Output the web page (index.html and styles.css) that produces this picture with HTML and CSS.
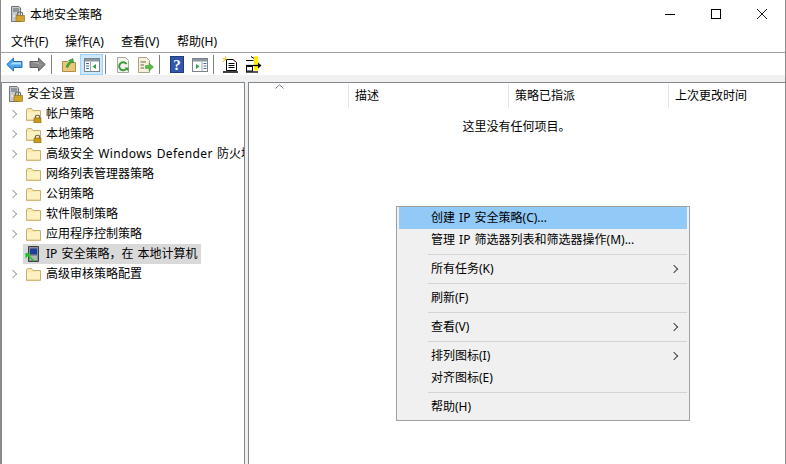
FILE: index.html
```html
<!DOCTYPE html>
<html lang="zh-CN">
<head>
	<meta charset="UTF-8">
	<title>本地安全策略</title>
	<link rel="stylesheet" href="styles.css">
</head>
<body>
	<svg class="defs" width="0" height="0">
		<symbol id="folder" viewBox="0 0 16 16">
			<path d="M1.500 3.500V14.500H15.500V4.500H8L6.500 2.500H2.500Z" fill="#fbe9a8" stroke="#c4b07c"/>
			<path d="M2 6H15V14H2Z" fill="#fdf1c0"/>
			<path d="M2 14H15" stroke="#dcc27a"/>
		</symbol>
		<symbol id="lock" viewBox="0 0 9 9">
			<path d="M2.500 4V2.500C2.500 .8 6.500 .8 6.500 2.500V4" fill="none" stroke="#6b6b5a" stroke-width="1.200"/>
			<rect x="1" y="4" width="7" height="5" fill="#c99a1e" stroke="#8a6510" stroke-width=".6"/>
		</symbol>
		<symbol id="server" viewBox="0 0 16 16">
			<path d="M1.500 .5H9L10.500 2V15.500H1.500Z" fill="#c4cad2" stroke="#6f7680"/>
			<path d="M3 3H9M3 5H9" stroke="#596069"/>
			<path d="M3 10H6" stroke="#fff"/>
			<path d="M7.500 9.500V7.500C7.500 5.500 12.500 5.500 12.500 7.500V9.500" fill="none" stroke="#6b6b5a" stroke-width="1.200"/>
			<rect x="6" y="9.500" width="8.500" height="6" fill="#d2a32a" stroke="#8a6510" stroke-width=".6"/>
		</symbol>
	</svg>

	<div class="window">
		<div class="titlebar">
			<svg class="title_icon" width="16" height="16"><use href="#server"/></svg>
			<span class="title_text">本地安全策略</span>
			<div class="win_btns">
				<svg width="12" height="12" viewBox="0 0 12 12"><path d="M1 6.500H11" stroke="#000"/></svg>
				<svg width="12" height="12" viewBox="0 0 12 12"><rect x="1.500" y="1.500" width="9" height="9" fill="none" stroke="#000"/></svg>
				<svg width="12" height="12" viewBox="0 0 12 12"><path d="M1 1L11 11M11 1L1 11" stroke="#000" stroke-width=".9"/></svg>
			</div>
		</div>

		<div class="menubar">
			<span>文件(F)</span>
			<span>操作(A)</span>
			<span>查看(V)</span>
			<span>帮助(H)</span>
		</div>

		<div class="toolbar">
			<span class="tool">
				<svg width="17" height="15" viewBox="0 0 17 15"><path d="M.8 7.500L7.500 1V4.500H16V10.500H7.500V14Z" fill="#4aa6ec" stroke="#2a6fb5"/><path d="M7 5.300H15V7.500H4Z" fill="#a9dcf8"/></svg>
			</span>
			<span class="tool">
				<svg width="17" height="15" viewBox="0 0 17 15"><path d="M16.200 7.500L9.500 1V4.500H1V10.500H9.500V14Z" fill="#8a8a8a" stroke="#5c5c5c"/><path d="M2 5.300H10V7.500H13Z" fill="#b5b5b5"/></svg>
			</span>
			<i class="sep"></i>
			<span class="tool">
				<svg width="16" height="16" viewBox="0 0 16 16"><path d="M1.500 4.500V14.500H14.500V5.500H8L7 4.500Z" fill="#e9c877" stroke="#b08c45"/><path d="M5 10C6 7 7.500 5.500 9 4.500L7.500 3.500L12 1.500L12.500 6L11 5C9.500 6.500 8 8 7 10.500Z" fill="#3fae3a" stroke="#2a7d28" stroke-width=".5"/></svg>
			</span>
			<span class="tool active">
				<svg width="16" height="16" viewBox="0 0 16 16"><rect x=".5" y="1.500" width="15" height="13" fill="#fff" stroke="#7b848c"/><path d="M1 2H15V4.500H1Z" fill="#8e979f"/><path d="M6.500 5V14" stroke="#9aa3aa"/><path d="M2 6.500H5M2 9H5M2 11.500H5" stroke="#3a6ea5" stroke-width="1.200"/><path d="M12 7V12L8.500 9.500Z" fill="#2ea043"/></svg>
			</span>
			<i class="sep"></i>
			<span class="tool">
				<svg width="14" height="16" viewBox="0 0 14 16"><path d="M1.500 .5H9.500L12.500 3.500V15.500H1.500Z" fill="#f4f4f0" stroke="#a9a9a0"/><path d="M10.500 7A4 4 0 1 0 10.500 11.500" fill="none" stroke="#3b9c3a" stroke-width="2"/><path d="M8.500 10.500H12.500V14.500Z" fill="#3b9c3a"/></svg>
			</span>
			<span class="tool">
				<svg width="17" height="16" viewBox="0 0 17 16"><path d="M1.500 .5H9.500L12.500 3.500V15.500H1.500Z" fill="#f7f1d8" stroke="#a9a28c"/><path d="M3.500 5H9M3.500 8H7M3.500 11H7" stroke="#6e6a5c"/><path d="M8.500 8.500H12V6L16.500 10L12 14V11.500H8.500Z" fill="#55b848" stroke="#3c8f35" stroke-width=".5"/></svg>
			</span>
			<i class="sep"></i>
			<span class="tool">
				<svg width="14" height="17" viewBox="0 0 14 17"><rect x=".5" y=".5" width="13" height="16" fill="#3158a8" stroke="#1f3c80"/><text x="7" y="13.500" class="help_mark">?</text></svg>
			</span>
			<span class="tool">
				<svg width="16" height="16" viewBox="0 0 16 16"><rect x=".5" y="1.500" width="15" height="13" fill="#fff" stroke="#7b848c"/><path d="M1 2H15V4.500H1Z" fill="#8e979f"/><path d="M10 5V14" stroke="#9aa3aa"/><path d="M11.500 6.500H14.500M11.500 9H14.500M11.500 11.500H14.500" stroke="#3a6ea5" stroke-width="1.200"/><path d="M4 7V12L7.500 9.500Z" fill="#2ea043"/></svg>
			</span>
			<i class="sep"></i>
			<span class="tool">
				<svg width="17" height="17" viewBox="0 0 17 17"><path d="M4.500 3.500H11L14.500 6.500V14.500H4.500Z" fill="#fff" stroke="#000"/><path d="M6.500 7.500H12.500M6.500 9.500H12.500M6.500 11.500H12.500" stroke="#000"/><path d="M1 16H16" stroke="#000" stroke-width="1.500"/><path d="M.5 2L4 3.500M3.500 .5L4 3.500M.5 5.500L4 3.500" stroke="#e6b800"/></svg>
			</span>
			<span class="tool">
				<svg width="17" height="17" viewBox="0 0 17 17"><rect x="9" y=".5" width="4" height="14" fill="#ffee00"/><path d="M1 9.500H14" stroke="#000" stroke-width="1.200"/><path d="M13 6.500L16.500 9.500L13 12.500Z"/><rect x="1.500" y="10.500" width="6" height="4.500" fill="#fff" stroke="#000"/><path d="M1 4.500H8.500M6 .5L9 2.500" stroke="#000"/><path d="M1 16H13" stroke="#000" stroke-width="1.300"/></svg>
			</span>
		</div>

		<div class="content">
			<div class="tree">
				<div class="row root">
					<svg width="16" height="16"><use href="#server"/></svg>
					<span>安全设置</span>
				</div>
				<div class="row">
					<i class="chev"></i>
					<span class="icon_box"><svg width="16" height="16"><use href="#folder"/></svg><svg class="lock" width="9" height="9"><use href="#lock"/></svg></span>
					<span>帐户策略</span>
				</div>
				<div class="row">
					<i class="chev"></i>
					<span class="icon_box"><svg width="16" height="16"><use href="#folder"/></svg><svg class="lock" width="9" height="9"><use href="#lock"/></svg></span>
					<span>本地策略</span>
				</div>
				<div class="row">
					<i class="chev"></i>
					<span class="icon_box"><svg width="16" height="16"><use href="#folder"/></svg></span>
					<span>高级安全 <b class="latin">Windows Defender</b> 防火墙</span>
				</div>
				<div class="row">
					<i class="chev none"></i>
					<span class="icon_box"><svg width="16" height="16"><use href="#folder"/></svg></span>
					<span>网络列表管理器策略</span>
				</div>
				<div class="row">
					<i class="chev"></i>
					<span class="icon_box"><svg width="16" height="16"><use href="#folder"/></svg></span>
					<span>公钥策略</span>
				</div>
				<div class="row">
					<i class="chev"></i>
					<span class="icon_box"><svg width="16" height="16"><use href="#folder"/></svg></span>
					<span>软件限制策略</span>
				</div>
				<div class="row">
					<i class="chev"></i>
					<span class="icon_box"><svg width="16" height="16"><use href="#folder"/></svg></span>
					<span>应用程序控制策略</span>
				</div>
				<div class="row selected">
					<span class="icon_box">
						<svg width="16" height="17" viewBox="0 0 16 17"><path d="M3.500 .5H13.500V15.500H3.500Z" fill="#8b8f94" stroke="#3c4046"/><rect x="5" y="2.500" width="7" height="6" fill="#1c3f9c"/><path d="M5 11H12M5 13H12" stroke="#d5d8da"/><path d="M1 7.500L9 15" stroke="#19c41f" stroke-width="1.600"/><path d="M.5 7V12.500L5.500 7.500Z" fill="#19c41f"/></svg>
					</span>
					<span>IP 安全策略，在 本地计算机</span>
				</div>
				<div class="row">
					<i class="chev"></i>
					<span class="icon_box"><svg width="16" height="16"><use href="#folder"/></svg></span>
					<span>高级审核策略配置</span>
				</div>
			</div>

			<div class="list">
				<div class="list_head">
					<div class="col col_name"><svg class="caret" width="9" height="5" viewBox="0 0 9 5"><path d="M.5 4.500L4.500 .8L8.500 4.500" fill="none" stroke="#777"/></svg></div>
					<div class="col col_desc">描述</div>
					<div class="col col_assign">策略已指派</div>
					<div class="col col_time">上次更改时间</div>
				</div>
				<div class="empty">这里没有任何项目。</div>
			</div>
		</div>

		<div class="ctx_menu">
			<div class="ctx_item hot">创建 IP 安全策略(C)...</div>
			<div class="ctx_item">管理 IP 筛选器列表和筛选器操作(M)...</div>
			<div class="ctx_sep"></div>
			<div class="ctx_item more">所有任务(K)</div>
			<div class="ctx_sep"></div>
			<div class="ctx_item">刷新(F)</div>
			<div class="ctx_sep"></div>
			<div class="ctx_item more">查看(V)</div>
			<div class="ctx_sep"></div>
			<div class="ctx_item more">排列图标(I)</div>
			<div class="ctx_item">对齐图标(E)</div>
			<div class="ctx_sep"></div>
			<div class="ctx_item">帮助(H)</div>
		</div>
	</div>
</body>
</html>
```

FILE: styles.css
```css
*{
	box-sizing: border-box;
}
body{
	margin: 0;
	font-family: "Noto Sans", "Noto Sans CJK SC", sans-serif;
	font-size: 12px;
	color: #000;
	overflow: hidden;
}
.defs{
	position: absolute;
}
svg{
	display: block;
	flex: none;
}
.window{
	position: relative;
	height: 464px;
	display: flex;
	flex-direction: column;
	background: #fff;
	border-left: 1px solid #8c8c8c;
	border-right: 1px solid #8c8c8c;
}
.titlebar{
	height: 30px;
	display: flex;
	align-items: center;
	padding: 0 0 3px 9px;
}
.title_text{
	margin-left: 4px;
}
.win_btns{
	margin-left: auto;
	margin-right: 17px;
	display: flex;
	gap: 34px;
}
.menubar{
	height: 23px;
	padding: 0 0 1px 10px;
	display: flex;
	align-items: center;
	border-bottom: 1px solid #a0a0a0;
}
.menubar span{
	width: 56px;
}
.menubar span:first-child{
	width: 54px;
}
.toolbar{
	height: 22px;
	display: flex;
	align-items: flex-end;
	padding-left: 2px;
}
.tool{
	height: 21px;
	width: 23px;
	display: flex;
	align-items: center;
	justify-content: center;
}
.tool.active{
	background: #cce8ff;
	border: 1px solid #99d1ff;
}
.help_mark{
	font-family: "Liberation Serif", serif;
	font-size: 15px;
	font-weight: bold;
	fill: #fff;
	text-anchor: middle;
}
.sep{
	width: 1px;
	height: 19px;
	margin: 0 5px 1px 2px;
	background: #808080;
}
.content{
	flex: 1;
	min-height: 0;
	display: flex;
	gap: 3px;
	padding-top: 7px;
	background: #f0f0f0;
}
.tree{
	width: 244px;
	padding-top: 1px;
	background: #fff;
	border: 1px solid #828790;
	border-bottom: 0;
	overflow: hidden;
}
.row{
	height: 20px;
	display: flex;
	align-items: center;
	white-space: nowrap;
	word-spacing: 1px;
	padding-left: 6px;
}
.row span:last-child{
	margin-left: 5px;
	padding-bottom: 2px;
}
.row.root svg{
	margin-right: -2px;
}
.latin{
	font-weight: normal;
	letter-spacing: .4px;
}
.chev{
	flex: none;
	width: 6px;
	height: 6px;
	margin: 0 9px 0 2px;
	border-top: 1.5px solid #a6a6a6;
	border-right: 1.5px solid #a6a6a6;
	transform: rotate(45deg);
}
.chev.none{
	border: 0;
}
.icon_box{
	position: relative;
	display: block;
	width: 16px;
	height: 16px;
	flex: none;
}
.lock{
	position: absolute;
	right: -1px;
	bottom: -1px;
}
.row.selected{
	width: 178px;
	margin-left: 21px;
	padding-left: 2px;
	background: #d9d9d9;
}
.list{
	flex: 1;
	min-width: 0;
	background: #fff;
	border: 1px solid #828790;
	border-bottom: 0;
	border-right: 0;
}
.list_head{
	display: flex;
	height: 25px;
	padding-top: 1px;
}
.col{
	padding: 2px 0 0 6px;
	border-right: 1px solid #e5e5e5;
}
.col_name{
	width: 100px;
	position: relative;
}
.caret{
	position: absolute;
	left: 26px;
	top: 0;
}
.col_desc{
	width: 160px;
}
.col_assign{
	width: 160px;
}
.col_time{
	flex: 1;
	border-right: 0;
}
.empty{
	text-align: center;
	padding: 9px 1px 0 0;
}
.ctx_menu{
	position: absolute;
	left: 395px;
	top: 206px;
	width: 294px;
	height: 215px;
	padding: 0 2px;
	background: #f0f0f0;
	border: 1px solid #a0a0a0;
}
.ctx_item{
	position: relative;
	height: 22px;
	line-height: 22px;
	padding-left: 32px;
	word-spacing: 1px;
}
.ctx_item.hot{
	background: #91c9f7;
}
.ctx_item.more::after{
	content: "";
	position: absolute;
	right: 10px;
	top: 8px;
	width: 5px;
	height: 5px;
	border-top: 1px solid #444;
	border-right: 1px solid #444;
	transform: rotate(45deg);
}
.ctx_sep{
	height: 1px;
	margin: 3px 0 3px 29px;
	background: #d4d4d4;
}
```
